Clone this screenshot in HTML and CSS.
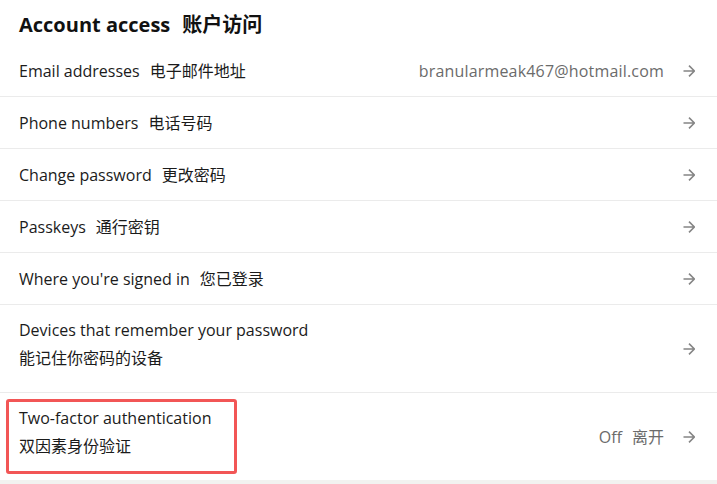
FILE: index.html
```html
<!DOCTYPE html>
<html lang="zh-CN">
<head>
<meta charset="utf-8">
<title>Account access</title>
<link rel="stylesheet" href="styles.css">
</head>
<body>
<main class="panel">
  <h1 class="title">Account access<span class="zh">账户访问</span></h1>
  <ul class="list">
    <li class="row">
      <div class="label">Email addresses<span class="zh">电子邮件地址</span></div>
      <div class="side"><span class="meta email">branularmeak467@hotmail.com</span><svg class="arrow" viewBox="0 0 12 12" aria-hidden="true"><path d="M0.5 6H11.5M6 0.6L11.4 6L6 11.4"/></svg></div>
    </li>
    <li class="row">
      <div class="label">Phone numbers<span class="zh">电话号码</span></div>
      <div class="side"><svg class="arrow" viewBox="0 0 12 12" aria-hidden="true"><path d="M0.5 6H11.5M6 0.6L11.4 6L6 11.4"/></svg></div>
    </li>
    <li class="row">
      <div class="label">Change password<span class="zh">更改密码</span></div>
      <div class="side"><svg class="arrow" viewBox="0 0 12 12" aria-hidden="true"><path d="M0.5 6H11.5M6 0.6L11.4 6L6 11.4"/></svg></div>
    </li>
    <li class="row">
      <div class="label">Passkeys<span class="zh">通行密钥</span></div>
      <div class="side"><svg class="arrow" viewBox="0 0 12 12" aria-hidden="true"><path d="M0.5 6H11.5M6 0.6L11.4 6L6 11.4"/></svg></div>
    </li>
    <li class="row">
      <div class="label">Where you're signed in<span class="zh">您已登录</span></div>
      <div class="side"><svg class="arrow" viewBox="0 0 12 12" aria-hidden="true"><path d="M0.5 6H11.5M6 0.6L11.4 6L6 11.4"/></svg></div>
    </li>
    <li class="row tall">
      <div class="label stack"><span>Devices that remember your password</span><span>能记住你密码的设备</span></div>
      <div class="side"><svg class="arrow" viewBox="0 0 12 12" aria-hidden="true"><path d="M0.5 6H11.5M6 0.6L11.4 6L6 11.4"/></svg></div>
    </li>
    <li class="row tall last">
      <div class="label stack"><span>Two-factor authentication</span><span>双因素身份验证</span></div>
      <div class="side"><span class="meta">Off<span class="zh">离开</span></span><svg class="arrow" viewBox="0 0 12 12" aria-hidden="true"><path d="M0.5 6H11.5M6 0.6L11.4 6L6 11.4"/></svg></div>
      <div class="highlight"></div>
    </li>
  </ul>
</main>
</body>
</html>
```
FILE: styles.css
```css
html, body {
  margin: 0;
  padding: 0;
  background: #f2f2f0;
}
body {
  font-family: "Open Sans", "Noto Sans CJK SC", sans-serif;
  color: #1b1b1b;
  font-size: 16px;
}
.panel {
  background: #ffffff;
  height: 480px;
  overflow: hidden;
}
.title {
  margin: 0;
  height: 45px;
  box-sizing: border-box;
  padding: 11px 0 0 19px;
  font-size: 20px;
  line-height: 28px;
  font-weight: 700;
  color: #111;
}
.title .zh {
  margin-left: 12px;
}
.list {
  list-style: none;
  margin: 0;
  padding: 0;
}
.row {
  position: relative;
  display: flex;
  align-items: center;
  justify-content: space-between;
  min-height: 51px;
  padding: 0 22px 0 19px;
  border-bottom: 1px solid #ebebeb;
}
.row.tall {
  min-height: 87px;
}
.row.last {
  border-bottom: none;
}
.label {
  line-height: 24px;
}
.label .zh {
  margin-left: 10px;
}
.stack {
  display: flex;
  flex-direction: column;
  line-height: 28px;
  padding: 11px 0 20px;
}
.side {
  display: flex;
  align-items: center;
}
.meta {
  color: #6b6b6b;
  margin-right: 19px;
  line-height: 24px;
}
.meta.email {
  letter-spacing: 0.18px;
}
.meta .zh {
  margin-left: 10px;
}
.arrow {
  width: 12px;
  height: 12px;
  fill: none;
  stroke: #858585;
  stroke-width: 1.6;
}
.highlight {
  position: absolute;
  left: 6px;
  top: 6px;
  width: 231px;
  height: 75px;
  box-sizing: border-box;
  border: 3px solid #f25656;
  border-radius: 3px;
  pointer-events: none;
}
```
